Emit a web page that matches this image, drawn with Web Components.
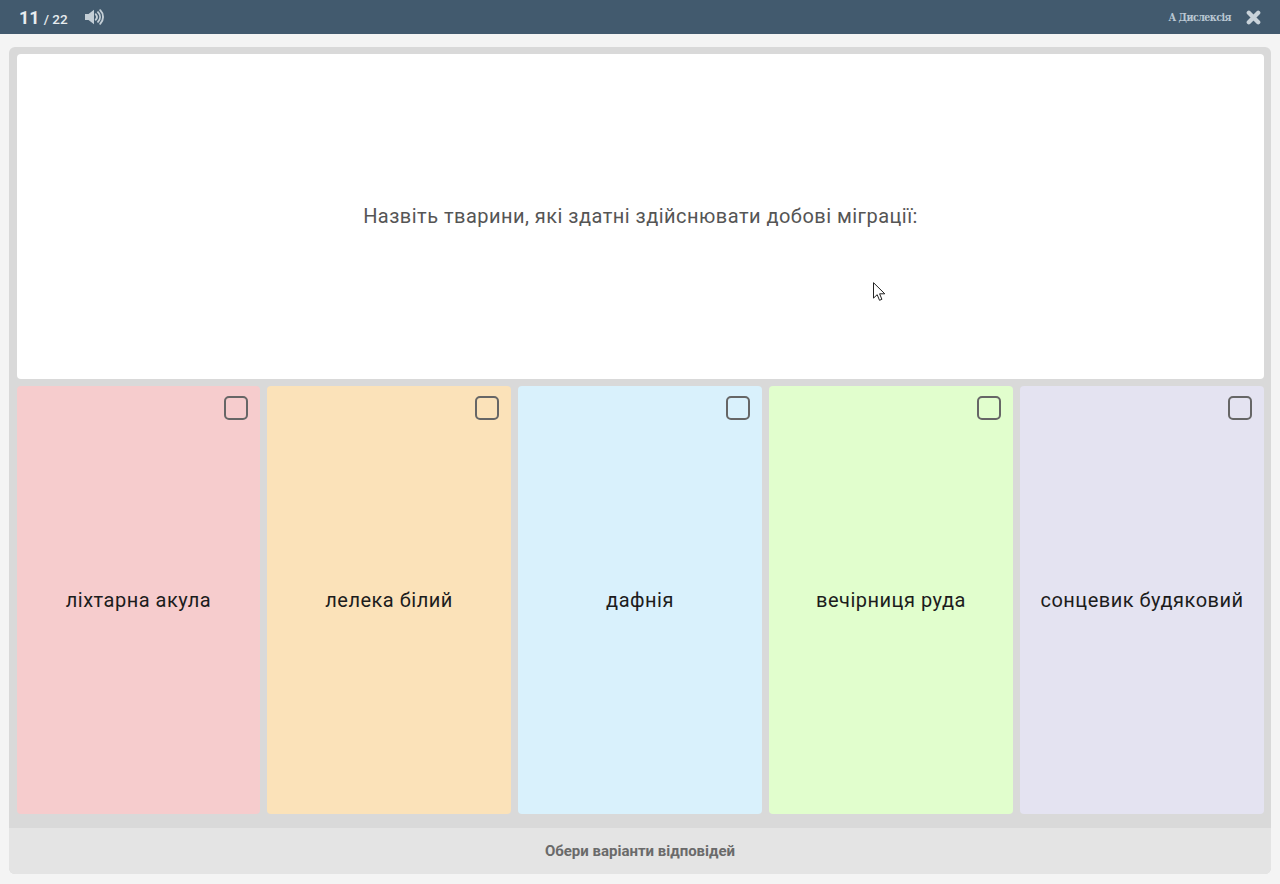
<!DOCTYPE html>
<html lang="uk">
<head>
<meta charset="utf-8">
<title>Тест</title>
<style>
  html, body { margin: 0; height: 100%; }
  body {
    background: #f4f4f4;
    font-family: Roboto, "Liberation Sans", sans-serif;
    position: relative;
    overflow: hidden;
  }
</style>
</head>
<body>
<quiz-header current="11" total="22"></quiz-header>
<quiz-board>
  <quiz-question slot="question">Назвіть тварини, які здатні здійснювати добові міграції:</quiz-question>
  <quiz-option slot="options" color="#f6cccd">ліхтарна акула</quiz-option>
  <quiz-option slot="options" color="#fbe2b9">лелека білий</quiz-option>
  <quiz-option slot="options" color="#d9f1fc">дафнія</quiz-option>
  <quiz-option slot="options" color="#e1fecd">вечірниця руда</quiz-option>
  <quiz-option slot="options" color="#e4e3f1">сонцевик будяковий</quiz-option>
  <span slot="footer">Обери варіанти відповідей</span>
</quiz-board>
<mouse-cursor></mouse-cursor>

<script>
// верхня панель: лічильник, звук, дислексія, закрити
class QuizHeader extends HTMLElement {
  constructor() {
    super();
    this.attachShadow({ mode: 'open' });
  }

  connectedCallback() {
    this.shadowRoot.innerHTML = `
      <style>
        :host {
          display: flex; align-items: center;
          height: 34px; box-sizing: border-box;
          padding: 0 19px 0 19px;
          background: #425a6e;
          color: #e8ecef;
        }
        .count { font-size: 13.5px; font-weight: 500; display: flex; align-items: baseline; width: 66px; }
        .count b { font-size: 18px; font-weight: 700; margin-right: 4px; }
        .sound { display: block; }
        .spacer { flex: 1; }
        .dys {
          font: bold 10.5px "DejaVu Serif Condensed", "DejaVu Serif", "Liberation Serif", serif;
          letter-spacing: -0.5px;
          color: #b9c7d2;
          margin-right: 15px;
          white-space: nowrap;
        }
        .close { display: block; }
      </style>
      <div class="count"><b>${this.getAttribute('current')}</b>/ ${this.getAttribute('total')}</div>
      <svg class="sound" width="20" height="16" viewBox="0 0 20 16">
        <path d="M0 5h3.500L9 .8v14.400L3.500 11H0z" fill="#c3ced6"/>
        <path d="M10.800 5.300c1.400 1.600 1.400 3.800 0 5.400M13 3.200c2.700 2.800 2.700 6.800 0 9.600M15.200 1.200c3.800 3.800 3.800 9.800 0 13.600"
              fill="none" stroke="#c3ced6" stroke-width="1.900" stroke-linecap="round"/>
      </svg>
      <div class="spacer"></div>
      <span class="dys">А Дислексія</span>
      <svg class="close" width="15" height="15" viewBox="0 0 15 15">
        <path d="M2.800 2.800l9.400 9.400M12.200 2.800l-9.400 9.400" stroke="#c9d3da" stroke-width="4.300" stroke-linecap="round"/>
      </svg>
    `;
  }
}
customElements.define('quiz-header', QuizHeader);

// сіра панель з питанням, варіантами і підказкою внизу
class QuizBoard extends HTMLElement {
  constructor() {
    super();
    this.attachShadow({ mode: 'open' });
    this.shadowRoot.innerHTML = `
      <style>
        :host {
          display: block;
          margin: 13px 9px 0;
          border-radius: 6px;
          overflow: hidden;
          background: #d9d9d9;
        }
        .top { padding: 7px 7px 14px 8px; display: flex; flex-direction: column; gap: 7px; }
        .options { display: grid; grid-template-columns: 243px repeat(4, 244px); gap: 7px; height: 428px; }
        .footer {
          height: 46px; display: flex; align-items: center; justify-content: center;
          background: #e4e4e4;
          color: #6a6a6a;
          font-size: 15px; font-weight: 700;
        }
      </style>
      <div class="top">
        <slot name="question"></slot>
        <div class="options"><slot name="options"></slot></div>
      </div>
      <div class="footer"><slot name="footer"></slot></div>
    `;
  }
}
customElements.define('quiz-board', QuizBoard);

class QuizQuestion extends HTMLElement {
  constructor() {
    super();
    this.attachShadow({ mode: 'open' });
    this.shadowRoot.innerHTML = `
      <style>
        :host {
          display: flex; align-items: center; justify-content: center;
          height: 325px; padding-bottom: 2px; box-sizing: border-box;
          background: #fff; border-radius: 4px;
          color: #555; font-size: 20px; letter-spacing: 0.47px;
        }
      </style>
      <slot></slot>
    `;
  }
}
customElements.define('quiz-question', QuizQuestion);

class QuizOption extends HTMLElement {
  constructor() {
    super();
    this.attachShadow({ mode: 'open' });
  }

  connectedCallback() {
    this.shadowRoot.innerHTML = `
      <style>
        :host {
          display: flex; align-items: center; justify-content: center;
          position: relative;
          background: ${this.getAttribute('color')};
          border-radius: 4px;
          color: #1c1c1c; font-size: 20px; letter-spacing: 0.5px;
          white-space: nowrap;
          padding-bottom: 1px;
          box-sizing: border-box;
        }
        .check {
          position: absolute; top: 10px; right: 12px;
          width: 24px; height: 24px; box-sizing: border-box;
          border: 2px solid #666; border-radius: 5px;
        }
      </style>
      <span class="check"></span>
      <slot></slot>
    `;
  }
}
customElements.define('quiz-option', QuizOption);

// курсор миші поверх картки питання
class MouseCursor extends HTMLElement {
  constructor() {
    super();
    this.attachShadow({ mode: 'open' });
    this.shadowRoot.innerHTML = `
      <style>
        :host { position: absolute; left: 873px; top: 282px; display: block; width: 13px; height: 20px; }
        svg { display: block; }
      </style>
      <svg width="13" height="20" viewBox="0 0 13 20">
        <path d="M.5.700v15.400l3.700-3.400 2.300 5.600 2.400-1-2.300-5.500h5.200z" fill="#fff" stroke="#222" stroke-width="1" stroke-linejoin="round"/>
      </svg>
    `;
  }
}
customElements.define('mouse-cursor', MouseCursor);
</script>
</body>
</html>
